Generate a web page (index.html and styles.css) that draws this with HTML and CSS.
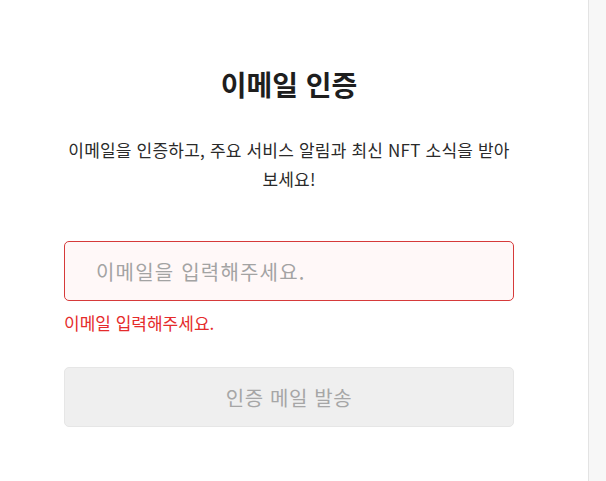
FILE: index.html
```html
<!DOCTYPE html>
<html lang="ko">
<head>
<meta charset="utf-8">
<title>이메일 인증</title>
<link rel="stylesheet" href="styles.css">
</head>
<body>
<div class="page">
  <main class="main">
    <div class="card">
      <h1 class="title">이메일 인증</h1>
      <p class="desc">이메일을 인증하고, 주요 서비스 알림과 최신 NFT 소식을 받아<br>보세요!</p>
      <input class="email" type="text" placeholder="이메일을 입력해주세요.">
      <p class="error">이메일 입력해주세요.</p>
      <button class="send" type="button" disabled>인증 메일 발송</button>
    </div>
  </main>
  <div class="scrollbar"></div>
</div>
</body>
</html>
```

FILE: styles.css
```css
html, body {
  margin: 0;
  padding: 0;
  height: 100%;
  background: #ffffff;
}
body {
  font-family: "Noto Sans CJK KR", "Noto Sans", sans-serif;
  color: #222222;
}
.page {
  display: flex;
  height: 100%;
}
.main {
  flex: 1;
}
.scrollbar {
  width: 17px;
  border-left: 1px solid #e3e3e3;
  background: #f7f7f7;
}
.card {
  width: 450px;
  margin-left: 64px;
  padding-top: 66px;
  display: flex;
  flex-direction: column;
}
.title {
  margin: 0;
  font-size: 28px;
  line-height: 36px;
  font-weight: 700;
  text-align: center;
  color: #1e1e1e;
}
.desc {
  margin: 33px 0 0;
  font-size: 17px;
  line-height: 29px;
  letter-spacing: 0.2px;
  text-align: center;
  color: #2a2a2a;
}
.email {
  box-sizing: border-box;
  margin-top: 48px;
  width: 100%;
  height: 60px;
  padding: 0 0 0 31px;
  border: 1px solid #d63a3a;
  border-radius: 5px;
  background: #fff8f8;
  font-family: inherit;
  font-size: 20px;
  letter-spacing: 1.2px;
  color: #333;
  outline: none;
}
.email::placeholder {
  color: #a3a3a3;
}
.error {
  margin: 10px 0 0;
  font-size: 17px;
  line-height: 24px;
  color: #e52b2b;
}
.send {
  box-sizing: border-box;
  margin-top: 32px;
  width: 100%;
  height: 60px;
  border: 1px solid #e6e6e6;
  border-radius: 5px;
  background: #efefef;
  font-family: inherit;
  font-size: 20px;
  letter-spacing: 0.6px;
  color: #a6a6a6;
}
```
